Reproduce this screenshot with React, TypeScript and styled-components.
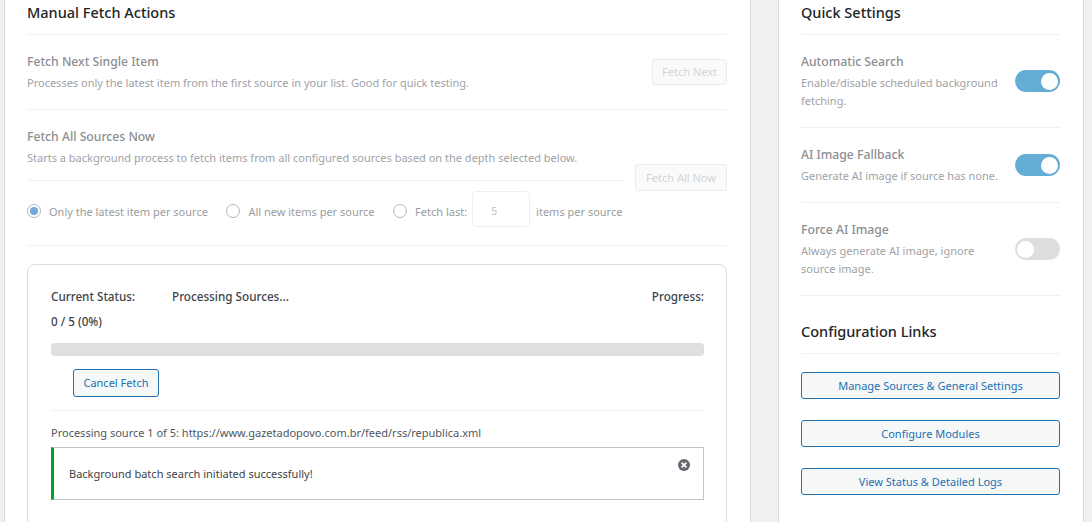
import React from 'react';
import styled, { createGlobalStyle } from 'styled-components';

const GlobalStyle = createGlobalStyle`
  html, body {
    margin: 0;
    height: 522px;
    overflow: hidden;
    background: #f0f0f1;
    font-family: "Noto Sans", "Open Sans", sans-serif;
    font-size: 11px;
    line-height: 18px;
    color: #3c434a;
  }
`;

const Page = styled.div`
  display: grid;
  grid-template-columns: 747px 306px;
  column-gap: 27px;
  padding-left: 4px;
  height: 522px;
  overflow: hidden;
`;

const Panel = styled.section`
  box-sizing: border-box;
  height: 560px;
  padding: 0 23px 0 22px;
  background: #fff;
  border-left: 1px solid #dcdcde;
  border-right: 1px solid #dcdcde;
`;

const Heading = styled.h2`
  margin: 0;
  padding-bottom: 10px;
  font-size: 14.5px;
  font-weight: 500;
  line-height: 24px;
  color: #1d2327;
  border-bottom: 1px solid #f0f0f1;
`;

const Row = styled.div<{ $flush?: boolean }>`
  display: flex;
  justify-content: space-between;
  align-items: center;
  padding: 17px 0 ${({ $flush }) => ($flush ? 0 : '17px')};
  border-bottom: ${({ $flush }) => ($flush ? 'none' : '1px solid #f0f0f1')};
`;

const FetchAllColumn = styled.div`
  width: 595px;
  flex-shrink: 0;
`;

const RowTitle = styled.div`
  padding-top: 1px;
  margin-bottom: 3px;
  font-size: 12.2px;
  font-weight: 500;
  color: #8b8e92;
`;

const RowText = styled.div<{ $narrow?: boolean }>`
  color: #9fa2a6;
  max-width: ${({ $narrow }) => ($narrow ? '205px' : 'none')};
`;

const DisabledButton = styled.button<{ $offset?: boolean }>`
  box-sizing: border-box;
  width: ${({ $offset }) => ($offset ? '92px' : '75px')};
  height: ${({ $offset }) => ($offset ? '27px' : '26px')};
  padding: 0;
  font: inherit;
  color: #d3d5d7;
  background: #fafafa;
  border: 1px solid #ececed;
  border-radius: 3px;
  white-space: nowrap;
  align-self: ${({ $offset }) => ($offset ? 'flex-start' : 'center')};
  margin-top: ${({ $offset }) => ($offset ? '37px' : '0')};
`;

const DepthOptions = styled.div`
  display: flex;
  align-items: center;
  margin-top: 13px;
  padding-top: 10px;
  border-top: 1px solid #f0f0f1;
  white-space: nowrap;
`;

const DepthLabel = styled.label<{ $last?: boolean }>`
  display: flex;
  align-items: center;
  color: #9a9da1;
  margin-right: ${({ $last }) => ($last ? '0' : '18.5px')};
`;

const DepthText = styled.span`
  padding-top: 6px;
`;

const Radio = styled.span<{ $checked?: boolean }>`
  box-sizing: border-box;
  display: flex;
  align-items: center;
  justify-content: center;
  width: 14px;
  height: 14px;
  margin-right: 8px;
  margin-top: 4px;
  background: #fff;
  border: 1px solid #b4b6b9;
  border-radius: 50%;

  &::before {
    content: '';
    display: ${({ $checked }) => ($checked ? 'block' : 'none')};
    width: 8px;
    height: 8px;
    border-radius: 50%;
    background: #72a7dc;
  }
`;

const CountInput = styled.span`
  box-sizing: border-box;
  width: 58px;
  height: 36px;
  margin: 0 6px 0 5px;
  padding: 3px 14px 0 0;
  display: flex;
  align-items: center;
  justify-content: center;
  color: #c4c6c8;
  border: 1px solid #eeeeef;
  border-radius: 4px;
`;

const DepthFooter = styled.div`
  height: 18px;
  border-bottom: 1px solid #f0f0f1;
`;

const StatusCard = styled.div`
  box-sizing: border-box;
  height: 300px;
  margin-top: 18px;
  padding: 22px 22px 23px 23px;
  border: 1px solid #dcdcde;
  border-radius: 8px;
`;

const StatusLine = styled.div`
  display: flex;
  font-size: 11.7px;
  font-weight: 500;
  color: #3c434a;
`;

const StatusLabel = styled.span`
  width: 121px;
`;

const ProgressValue = styled.span`
  margin-left: auto;
`;

const CountLine = styled.div`
  margin-top: 7px;
  font-size: 11.7px;
  font-weight: 500;
  color: #3c434a;
`;

const ProgressTrack = styled.div`
  height: 13px;
  margin-top: 13px;
  background: #dfdfdf;
  border-radius: 4px;
`;

const OutlineButton = styled.button<{ $block?: boolean }>`
  box-sizing: border-box;
  display: block;
  width: ${({ $block }) => ($block ? '100%' : '86px')};
  height: ${({ $block }) => ($block ? '27px' : '28px')};
  margin: ${({ $block }) => ($block ? '0 0 21px' : '13px 0 13px 22px')};
  padding: 0;
  font: inherit;
  color: #2271b1;
  background: #f6f7f7;
  border: 1px solid #2271b1;
  border-radius: 3px;
`;

const LogLine = styled.div`
  padding-top: 13px;
  height: 23px;
  line-height: 18px;
  border-top: 1px solid #f0f0f1;
  color: #50575e;
`;

const Notice = styled.div`
  box-sizing: border-box;
  position: relative;
  height: 53px;
  display: flex;
  align-items: center;
  padding-left: 15px;
  background: #fff;
  border: 1px solid #c3c4c7;
  border-left: 3px solid #00a32a;
  color: #3c434a;
`;

const Dismiss = styled.svg`
  position: absolute;
  top: 11px;
  right: 13px;
  width: 12px;
  height: 12px;
`;

const Toggle = styled.span<{ $on?: boolean }>`
  box-sizing: border-box;
  flex-shrink: 0;
  display: flex;
  align-items: center;
  justify-content: ${({ $on }) => ($on ? 'flex-end' : 'flex-start')};
  width: 45px;
  height: 22px;
  padding: 0 2px;
  border-radius: 11px;
  background: ${({ $on }) => ($on ? '#64aed6' : '#dedede')};

  &::before {
    content: '';
    width: 17px;
    height: 17px;
    border-radius: 50%;
    background: #fff;
  }
`;

const SubHeading = styled(Heading)`
  margin-top: 23px;
`;

const LinkList = styled.div`
  margin-top: 18px;
`;

const settings = [
  { title: 'Automatic Search', text: 'Enable/disable scheduled background fetching.', on: true },
  { title: 'AI Image Fallback', text: 'Generate AI image if source has none.', on: true },
  { title: 'Force AI Image', text: 'Always generate AI image, ignore source image.', on: false },
];

const links = ['Manage Sources & General Settings', 'Configure Modules', 'View Status & Detailed Logs'];

export default function App() {
  return (
    <>
      <GlobalStyle />
      <Page>
        <Panel>
          <Heading>Manual Fetch Actions</Heading>
          <Row>
            <div>
              <RowTitle>Fetch Next Single Item</RowTitle>
              <RowText>Processes only the latest item from the first source in your list. Good for quick testing.</RowText>
            </div>
            <DisabledButton disabled>Fetch Next</DisabledButton>
          </Row>
          <Row $flush>
            <FetchAllColumn>
              <RowTitle>Fetch All Sources Now</RowTitle>
              <RowText>Starts a background process to fetch items from all configured sources based on the depth selected below.</RowText>
              <DepthOptions>
                <DepthLabel><Radio $checked /><DepthText>Only the latest item per source</DepthText></DepthLabel>
                <DepthLabel><Radio /><DepthText>All new items per source</DepthText></DepthLabel>
                <DepthLabel $last>
                  <Radio /><DepthText>Fetch last:</DepthText><CountInput>5</CountInput><DepthText>items per source</DepthText>
                </DepthLabel>
              </DepthOptions>
            </FetchAllColumn>
            <DisabledButton disabled $offset>Fetch All Now</DisabledButton>
          </Row>
          <DepthFooter />
          <StatusCard>
            <StatusLine>
              <StatusLabel>Current Status:</StatusLabel>
              <span>Processing Sources...</span>
              <ProgressValue>Progress:</ProgressValue>
            </StatusLine>
            <CountLine>0 / 5 (0%)</CountLine>
            <ProgressTrack />
            <OutlineButton>Cancel Fetch</OutlineButton>
            <LogLine>Processing source 1 of 5: https://www.gazetadopovo.com.br/feed/rss/republica.xml</LogLine>
            <Notice>
              Background batch search initiated successfully!
              <Dismiss viewBox="0 0 20 20">
                <circle cx="10" cy="10" r="10" fill="#646970" />
                <path d="M6 6l8 8M14 6l-8 8" stroke="#fff" strokeWidth="3" />
              </Dismiss>
            </Notice>
          </StatusCard>
        </Panel>
        <Panel>
          <Heading>Quick Settings</Heading>
          {settings.map((item) => (
            <Row key={item.title}>
              <div>
                <RowTitle>{item.title}</RowTitle>
                <RowText $narrow>{item.text}</RowText>
              </div>
              <Toggle $on={item.on} />
            </Row>
          ))}
          <SubHeading>Configuration Links</SubHeading>
          <LinkList>
            {links.map((label) => (
              <OutlineButton $block key={label}>{label}</OutlineButton>
            ))}
          </LinkList>
        </Panel>
      </Page>
    </>
  );
}
